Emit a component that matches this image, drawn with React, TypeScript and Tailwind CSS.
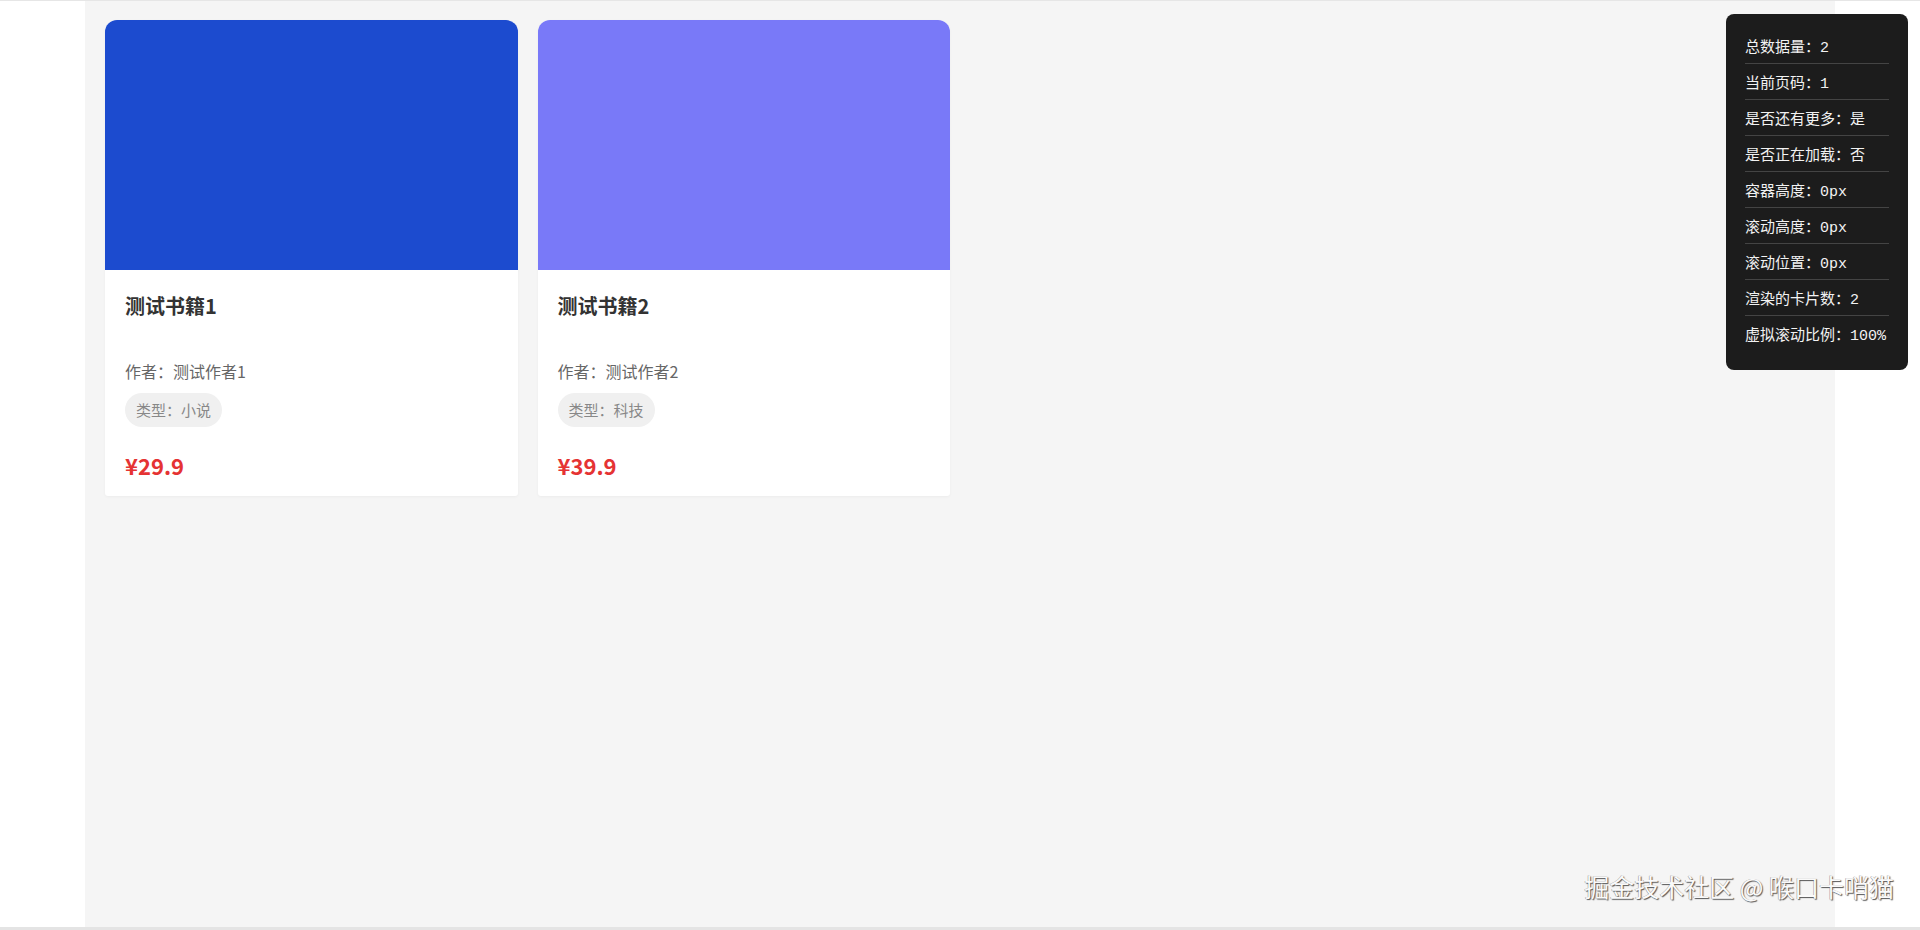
import React from 'react';

interface Book {
  id: number;
  title: string;
  author: string;
  category: string;
  price: number;
  cover: string;
}

const books: Book[] = [
  { id: 1, title: '测试书籍1', author: '测试作者1', category: '小说', price: 29.9, cover: 'bg-[#1c4bcf]' },
  { id: 2, title: '测试书籍2', author: '测试作者2', category: '科技', price: 39.9, cover: 'bg-[#7979f8]' },
];

const stats: [string, string][] = [
  ['总数据量', '2'],
  ['当前页码', '1'],
  ['是否还有更多', '是'],
  ['是否正在加载', '否'],
  ['容器高度', '0px'],
  ['滚动高度', '0px'],
  ['滚动位置', '0px'],
  ['渲染的卡片数', '2'],
  ['虚拟滚动比例', '100%'],
];

function BookCard({ book }: { book: Book }) {
  return (
    <div className="bg-white rounded-t-xl rounded-b-[3px] overflow-hidden shadow-[0_1px_3px_rgba(0,0,0,0.04)]">
      <div className={`h-[250px] ${book.cover}`} />
      <div className="px-5 pt-[23px] pb-[16px]">
        <h3 className="h-[52px] text-[20px] leading-[26px] font-bold text-[#333]">{book.title}</h3>
        <p className="mt-[14px] text-[16px] leading-[24px] text-[#666]">作者：{book.author}</p>
        <div className="mt-[10px]">
          <span className="inline-block rounded-full bg-[#f0f0f0] px-[11px] py-[6px] text-[15px] leading-[22px] text-[#888]">
            类型：{book.category}
          </span>
        </div>
        <div className="mt-[23px] text-[22px] leading-[30px] font-bold text-[#e53333]">¥{book.price}</div>
      </div>
    </div>
  );
}

export default function App() {
  return (
    <div
      className="relative h-[930px] overflow-hidden border-t border-[#e6e6e6] bg-white"
      style={{ fontFamily: '"Noto Sans CJK SC", "Noto Sans", sans-serif' }}
    >
      <div className="mx-auto h-full w-[1750px] bg-[#f5f5f5] px-5 pt-[19px]">
        <div className="grid grid-cols-4 gap-5">
          {books.map((b) => (
            <BookCard key={b.id} book={b} />
          ))}
        </div>
      </div>

      <div
        className="absolute top-[13px] right-[12px] w-[182px] rounded-lg bg-[#1c1c1c] px-[19px] pt-[25px] pb-[19px] text-[15px] leading-[20px] text-[#f2f2f2]"
        style={{ fontFamily: '"Liberation Mono", "Noto Sans CJK SC", monospace' }}
      >
        {stats.map(([k, v], i) => (
          <div
            key={k}
            className={i < stats.length - 1 ? 'mb-[11px] border-b border-[#444] pb-[4px]' : 'pb-[4px]'}
          >
            {k}：{v}
          </div>
        ))}
      </div>

      <div className="absolute right-[26px] bottom-[28px] text-[25px] leading-[32px] text-[#fafafa] [text-shadow:1px_1px_1px_#555,-0.5px_-0.5px_0_#999]">
        掘金技术社区 @ 喉口卡哨猫
      </div>

      <div className="absolute bottom-0 left-0 right-0 h-[3px] bg-[#e4e4e4]" />
    </div>
  );
}
